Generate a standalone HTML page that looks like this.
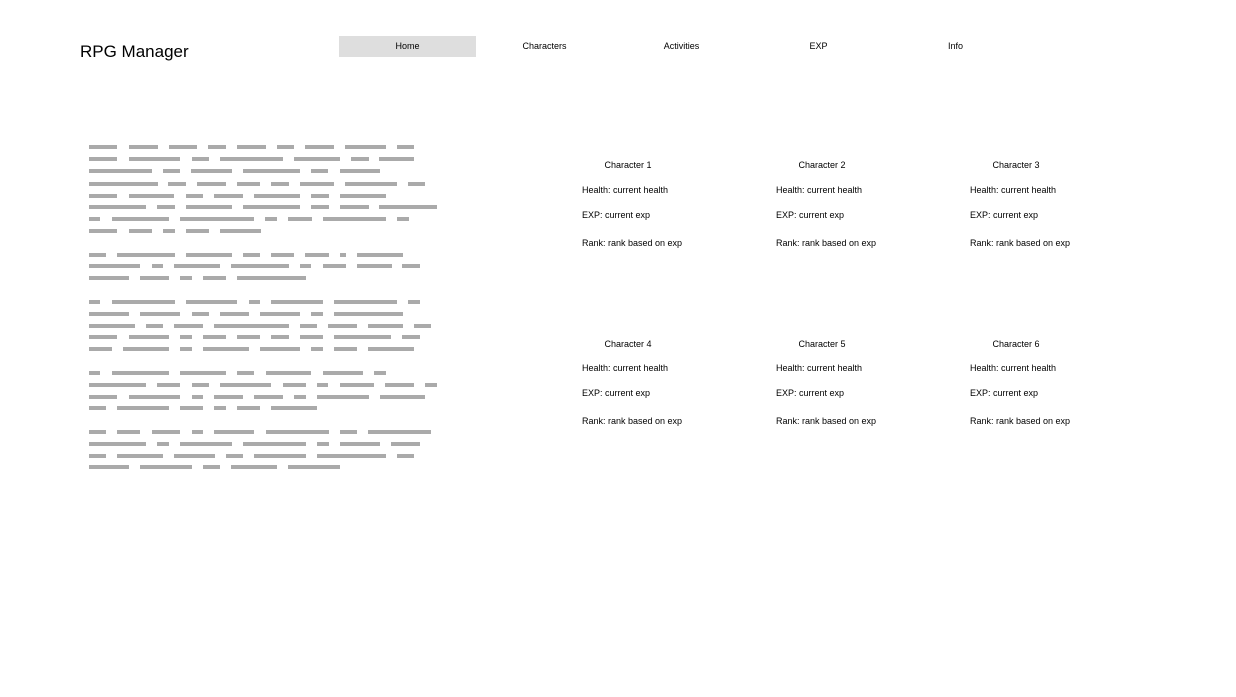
<!DOCTYPE html>
<html><head><meta charset="utf-8"><style>
body{margin:0;width:1236px;height:697px;background:#fff;position:relative;font-family:"Liberation Sans",Arial,sans-serif;overflow:hidden}
.t{position:absolute;left:80px;top:42px;font-size:17px;color:#000;line-height:20px}
.n{position:absolute;top:36px;width:137px;height:21px;line-height:21px;text-align:center;font-size:9px;color:#000}
.n.a{background:#dedede}
.b{position:absolute;height:4px;background:#aaa}
.c{position:absolute;font-size:9px;line-height:12px;color:#000;white-space:nowrap;margin-top:1px}
.h{width:92px;text-align:center}
</style></head><body>
<div class="t">RPG Manager</div>
<div class="n a" style="left:339px">Home</div>
<div class="n" style="left:476px">Characters</div>
<div class="n" style="left:613px">Activities</div>
<div class="n" style="left:750px">EXP</div>
<div class="n" style="left:887px">Info</div>

<div style="position:absolute;left:0;top:-2px">
<div class="b" style="top:147px;left:89px;width:28px"></div><div class="b" style="top:147px;left:129px;width:29px"></div><div class="b" style="top:147px;left:169px;width:28px"></div><div class="b" style="top:147px;left:208px;width:18px"></div><div class="b" style="top:147px;left:237px;width:29px"></div><div class="b" style="top:147px;left:277px;width:17px"></div><div class="b" style="top:147px;left:305px;width:29px"></div><div class="b" style="top:147px;left:345px;width:41px"></div><div class="b" style="top:147px;left:397px;width:17px"></div>
<div class="b" style="top:159px;left:89px;width:28px"></div><div class="b" style="top:159px;left:129px;width:51px"></div><div class="b" style="top:159px;left:192px;width:17px"></div><div class="b" style="top:159px;left:220px;width:63px"></div><div class="b" style="top:159px;left:294px;width:46px"></div><div class="b" style="top:159px;left:351px;width:18px"></div><div class="b" style="top:159px;left:379px;width:35px"></div>
<div class="b" style="top:171px;left:89px;width:63px"></div><div class="b" style="top:171px;left:163px;width:17px"></div><div class="b" style="top:171px;left:191px;width:41px"></div><div class="b" style="top:171px;left:243px;width:57px"></div><div class="b" style="top:171px;left:311px;width:17px"></div><div class="b" style="top:171px;left:340px;width:40px"></div>
<div class="b" style="top:184px;left:89px;width:69px"></div><div class="b" style="top:184px;left:168px;width:18px"></div><div class="b" style="top:184px;left:197px;width:29px"></div><div class="b" style="top:184px;left:237px;width:23px"></div><div class="b" style="top:184px;left:271px;width:18px"></div><div class="b" style="top:184px;left:300px;width:34px"></div><div class="b" style="top:184px;left:345px;width:52px"></div><div class="b" style="top:184px;left:408px;width:17px"></div>
<div class="b" style="top:196px;left:89px;width:28px"></div><div class="b" style="top:196px;left:129px;width:45px"></div><div class="b" style="top:196px;left:186px;width:17px"></div><div class="b" style="top:196px;left:214px;width:29px"></div><div class="b" style="top:196px;left:254px;width:46px"></div><div class="b" style="top:196px;left:311px;width:18px"></div><div class="b" style="top:196px;left:340px;width:46px"></div>
<div class="b" style="top:207px;left:89px;width:57px"></div><div class="b" style="top:207px;left:157px;width:18px"></div><div class="b" style="top:207px;left:186px;width:46px"></div><div class="b" style="top:207px;left:243px;width:57px"></div><div class="b" style="top:207px;left:311px;width:18px"></div><div class="b" style="top:207px;left:340px;width:29px"></div><div class="b" style="top:207px;left:379px;width:58px"></div>
<div class="b" style="top:219px;left:89px;width:11px"></div><div class="b" style="top:219px;left:112px;width:57px"></div><div class="b" style="top:219px;left:180px;width:74px"></div><div class="b" style="top:219px;left:265px;width:12px"></div><div class="b" style="top:219px;left:288px;width:24px"></div><div class="b" style="top:219px;left:323px;width:63px"></div><div class="b" style="top:219px;left:397px;width:12px"></div>
<div class="b" style="top:231px;left:89px;width:28px"></div><div class="b" style="top:231px;left:129px;width:23px"></div><div class="b" style="top:231px;left:163px;width:12px"></div><div class="b" style="top:231px;left:186px;width:23px"></div><div class="b" style="top:231px;left:220px;width:41px"></div>

<div class="b" style="top:255px;left:89px;width:17px"></div><div class="b" style="top:255px;left:117px;width:58px"></div><div class="b" style="top:255px;left:186px;width:46px"></div><div class="b" style="top:255px;left:243px;width:17px"></div><div class="b" style="top:255px;left:271px;width:23px"></div><div class="b" style="top:255px;left:305px;width:24px"></div><div class="b" style="top:255px;left:340px;width:6px"></div><div class="b" style="top:255px;left:357px;width:46px"></div>
<div class="b" style="top:266px;left:89px;width:51px"></div><div class="b" style="top:266px;left:152px;width:11px"></div><div class="b" style="top:266px;left:174px;width:46px"></div><div class="b" style="top:266px;left:231px;width:58px"></div><div class="b" style="top:266px;left:300px;width:11px"></div><div class="b" style="top:266px;left:323px;width:23px"></div><div class="b" style="top:266px;left:357px;width:35px"></div><div class="b" style="top:266px;left:402px;width:18px"></div>
<div class="b" style="top:278px;left:89px;width:40px"></div><div class="b" style="top:278px;left:140px;width:29px"></div><div class="b" style="top:278px;left:180px;width:12px"></div><div class="b" style="top:278px;left:203px;width:23px"></div><div class="b" style="top:278px;left:237px;width:69px"></div>

<div class="b" style="top:302px;left:89px;width:11px"></div><div class="b" style="top:302px;left:112px;width:63px"></div><div class="b" style="top:302px;left:186px;width:51px"></div><div class="b" style="top:302px;left:249px;width:11px"></div><div class="b" style="top:302px;left:271px;width:52px"></div><div class="b" style="top:302px;left:334px;width:63px"></div><div class="b" style="top:302px;left:408px;width:12px"></div>
<div class="b" style="top:314px;left:89px;width:40px"></div><div class="b" style="top:314px;left:140px;width:40px"></div><div class="b" style="top:314px;left:192px;width:17px"></div><div class="b" style="top:314px;left:220px;width:29px"></div><div class="b" style="top:314px;left:260px;width:40px"></div><div class="b" style="top:314px;left:311px;width:12px"></div><div class="b" style="top:314px;left:334px;width:69px"></div>
<div class="b" style="top:326px;left:89px;width:46px"></div><div class="b" style="top:326px;left:146px;width:17px"></div><div class="b" style="top:326px;left:174px;width:29px"></div><div class="b" style="top:326px;left:214px;width:75px"></div><div class="b" style="top:326px;left:300px;width:17px"></div><div class="b" style="top:326px;left:328px;width:29px"></div><div class="b" style="top:326px;left:368px;width:35px"></div><div class="b" style="top:326px;left:414px;width:17px"></div>
<div class="b" style="top:337px;left:89px;width:28px"></div><div class="b" style="top:337px;left:129px;width:40px"></div><div class="b" style="top:337px;left:180px;width:12px"></div><div class="b" style="top:337px;left:203px;width:23px"></div><div class="b" style="top:337px;left:237px;width:23px"></div><div class="b" style="top:337px;left:271px;width:18px"></div><div class="b" style="top:337px;left:300px;width:23px"></div><div class="b" style="top:337px;left:334px;width:57px"></div><div class="b" style="top:337px;left:402px;width:18px"></div>
<div class="b" style="top:349px;left:89px;width:23px"></div><div class="b" style="top:349px;left:123px;width:46px"></div><div class="b" style="top:349px;left:180px;width:12px"></div><div class="b" style="top:349px;left:203px;width:46px"></div><div class="b" style="top:349px;left:260px;width:40px"></div><div class="b" style="top:349px;left:311px;width:12px"></div><div class="b" style="top:349px;left:334px;width:23px"></div><div class="b" style="top:349px;left:368px;width:46px"></div>

<div class="b" style="top:373px;left:89px;width:11px"></div><div class="b" style="top:373px;left:112px;width:57px"></div><div class="b" style="top:373px;left:180px;width:46px"></div><div class="b" style="top:373px;left:237px;width:17px"></div><div class="b" style="top:373px;left:266px;width:45px"></div><div class="b" style="top:373px;left:323px;width:40px"></div><div class="b" style="top:373px;left:374px;width:12px"></div>
<div class="b" style="top:385px;left:89px;width:57px"></div><div class="b" style="top:385px;left:157px;width:23px"></div><div class="b" style="top:385px;left:192px;width:17px"></div><div class="b" style="top:385px;left:220px;width:51px"></div><div class="b" style="top:385px;left:283px;width:23px"></div><div class="b" style="top:385px;left:317px;width:11px"></div><div class="b" style="top:385px;left:340px;width:34px"></div><div class="b" style="top:385px;left:385px;width:29px"></div><div class="b" style="top:385px;left:425px;width:12px"></div>
<div class="b" style="top:397px;left:89px;width:28px"></div><div class="b" style="top:397px;left:129px;width:51px"></div><div class="b" style="top:397px;left:192px;width:11px"></div><div class="b" style="top:397px;left:214px;width:29px"></div><div class="b" style="top:397px;left:254px;width:29px"></div><div class="b" style="top:397px;left:294px;width:12px"></div><div class="b" style="top:397px;left:317px;width:52px"></div><div class="b" style="top:397px;left:380px;width:45px"></div>
<div class="b" style="top:408px;left:89px;width:17px"></div><div class="b" style="top:408px;left:117px;width:52px"></div><div class="b" style="top:408px;left:180px;width:23px"></div><div class="b" style="top:408px;left:214px;width:12px"></div><div class="b" style="top:408px;left:237px;width:23px"></div><div class="b" style="top:408px;left:271px;width:46px"></div>

<div class="b" style="top:432px;left:89px;width:17px"></div><div class="b" style="top:432px;left:117px;width:23px"></div><div class="b" style="top:432px;left:152px;width:28px"></div><div class="b" style="top:432px;left:192px;width:11px"></div><div class="b" style="top:432px;left:214px;width:40px"></div><div class="b" style="top:432px;left:266px;width:63px"></div><div class="b" style="top:432px;left:340px;width:17px"></div><div class="b" style="top:432px;left:368px;width:63px"></div>
<div class="b" style="top:444px;left:89px;width:57px"></div><div class="b" style="top:444px;left:157px;width:12px"></div><div class="b" style="top:444px;left:180px;width:52px"></div><div class="b" style="top:444px;left:243px;width:63px"></div><div class="b" style="top:444px;left:317px;width:12px"></div><div class="b" style="top:444px;left:340px;width:40px"></div><div class="b" style="top:444px;left:391px;width:29px"></div>
<div class="b" style="top:456px;left:89px;width:17px"></div><div class="b" style="top:456px;left:117px;width:46px"></div><div class="b" style="top:456px;left:174px;width:41px"></div><div class="b" style="top:456px;left:226px;width:17px"></div><div class="b" style="top:456px;left:254px;width:52px"></div><div class="b" style="top:456px;left:317px;width:69px"></div><div class="b" style="top:456px;left:397px;width:17px"></div>
<div class="b" style="top:467px;left:89px;width:40px"></div><div class="b" style="top:467px;left:140px;width:52px"></div><div class="b" style="top:467px;left:203px;width:17px"></div><div class="b" style="top:467px;left:231px;width:46px"></div><div class="b" style="top:467px;left:288px;width:52px"></div>
</div>

<div class="c h" style="left:582px;top:158px">Character 1</div>
<div class="c" style="left:582px;top:183px">Health: current health</div>
<div class="c" style="left:582px;top:208px">EXP: current exp</div>
<div class="c" style="left:582px;top:236px">Rank: rank based on exp</div>
<div class="c h" style="left:776px;top:158px">Character 2</div>
<div class="c" style="left:776px;top:183px">Health: current health</div>
<div class="c" style="left:776px;top:208px">EXP: current exp</div>
<div class="c" style="left:776px;top:236px">Rank: rank based on exp</div>
<div class="c h" style="left:970px;top:158px">Character 3</div>
<div class="c" style="left:970px;top:183px">Health: current health</div>
<div class="c" style="left:970px;top:208px">EXP: current exp</div>
<div class="c" style="left:970px;top:236px">Rank: rank based on exp</div>

<div class="c h" style="left:582px;top:337px">Character 4</div>
<div class="c" style="left:582px;top:361px">Health: current health</div>
<div class="c" style="left:582px;top:386px">EXP: current exp</div>
<div class="c" style="left:582px;top:414px">Rank: rank based on exp</div>
<div class="c h" style="left:776px;top:337px">Character 5</div>
<div class="c" style="left:776px;top:361px">Health: current health</div>
<div class="c" style="left:776px;top:386px">EXP: current exp</div>
<div class="c" style="left:776px;top:414px">Rank: rank based on exp</div>
<div class="c h" style="left:970px;top:337px">Character 6</div>
<div class="c" style="left:970px;top:361px">Health: current health</div>
<div class="c" style="left:970px;top:386px">EXP: current exp</div>
<div class="c" style="left:970px;top:414px">Rank: rank based on exp</div>
</body></html>
